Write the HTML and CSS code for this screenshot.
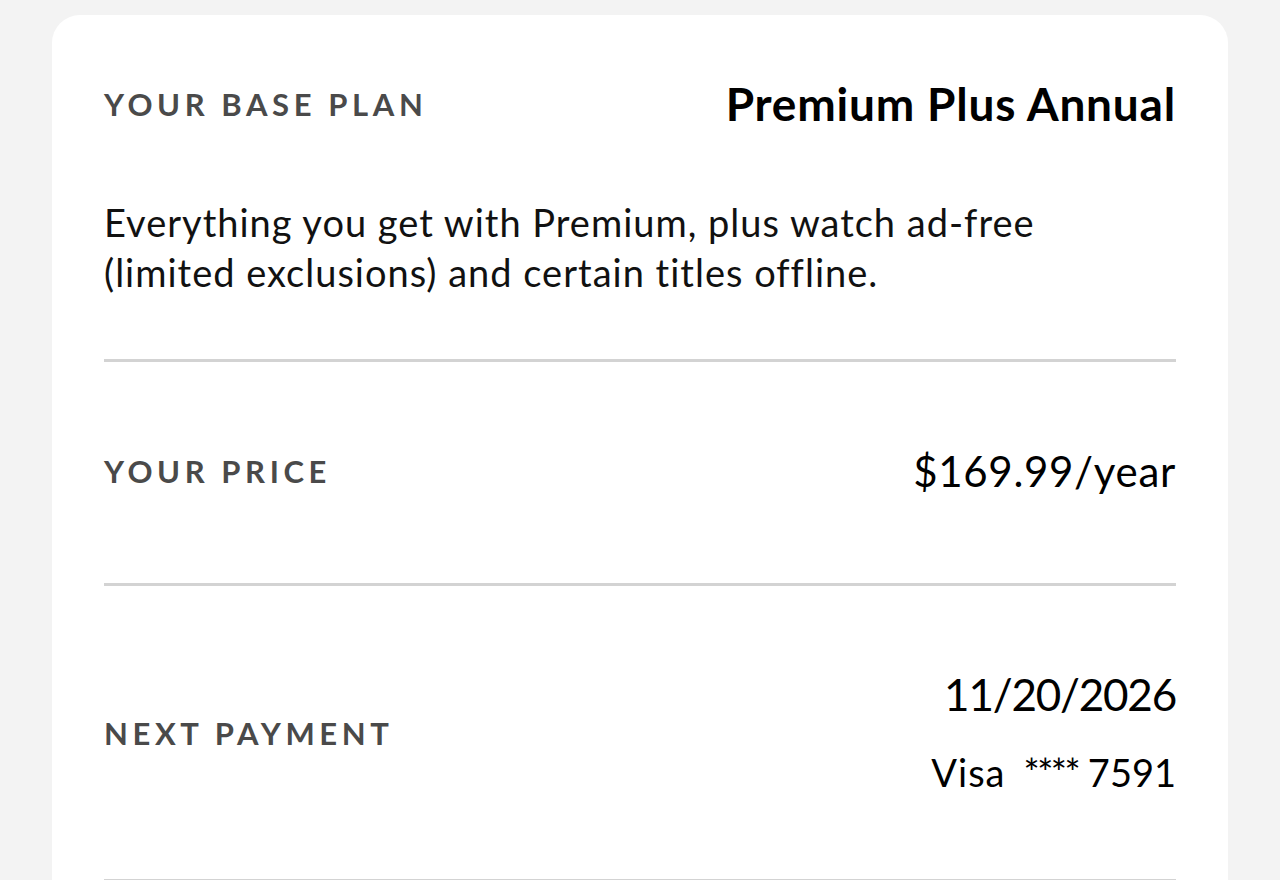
FILE: index.html
```html
<!DOCTYPE html>
<html lang="en">
<head>
    <meta charset="UTF-8">
    <meta name="viewport" content="width=device-width, initial-scale=1.0">
    <title>Plan details</title>
    <link rel="stylesheet" href="styles.css">
</head>
<body>
    <div class="card">
        <section class="row plan">
            <div class="plan-head">
                <span class="label">Your base plan</span>
                <span class="plan-name">Premium Plus Annual</span>
            </div>
            <p class="plan-desc">Everything you get with Premium, plus watch ad-free<br>(limited exclusions) and certain titles offline.</p>
        </section>

        <section class="row price">
            <span class="label">Your price</span>
            <span class="price-value">$169.99/year</span>
        </section>

        <section class="row payment">
            <span class="label">Next payment</span>
            <div class="payment-info">
                <span class="payment-date">11/20/2026</span>
                <span class="payment-card"><span class="card-brand">Visa</span><span class="card-mask">****</span> 7591</span>
            </div>
        </section>
    </div>
</body>
</html>
```

FILE: styles.css
```css
/* Estilos generales */
body {
    font-family: Lato, "Liberation Sans", sans-serif;
    background: #f3f3f3;
    color: #111;
    margin: 0;
}

.card {
    background: #fff;
    margin: 15px 52px 0;
    padding: 61px 52px 60px;
    border-radius: 28px 28px 0 0;
}

.row {
    border-bottom: 3px solid #d3d3d3;
}

.label {
    font-size: 31px;
    font-weight: 700;
    letter-spacing: 4.6px;
    text-transform: uppercase;
    color: #4a4a4a;
}

.plan {
    padding-bottom: 62px;
}

.plan-head {
    display: flex;
    justify-content: space-between;
    align-items: center;
}

.plan-name {
    font-size: 46px;
    line-height: 56px;
    font-weight: 700;
    letter-spacing: 0.8px;
    color: #000;
}

.plan-desc {
    margin: 65px 0 0;
    font-size: 38px;
    line-height: 50px;
    letter-spacing: 1px;
}

.price,
.payment {
    display: flex;
    justify-content: space-between;
    align-items: center;
}

.price {
    padding: 84px 0 87px;
}

.price-value {
    font-size: 42px;
    line-height: 50px;
    letter-spacing: 0.7px;
    color: #000;
}

.payment {
    padding: 82px 0;
}

.payment-info {
    display: flex;
    flex-direction: column;
    align-items: flex-end;
    gap: 27px;
}

.payment-date {
    font-size: 44px;
    line-height: 52px;
    letter-spacing: -1.2px;
    color: #000;
}

.payment-card {
    font-size: 38px;
    line-height: 50px;
    color: #000;
}

.card-brand {
    letter-spacing: 1px;
    margin-right: 18px;
}

.card-mask {
    letter-spacing: -2.5px;
}
```
